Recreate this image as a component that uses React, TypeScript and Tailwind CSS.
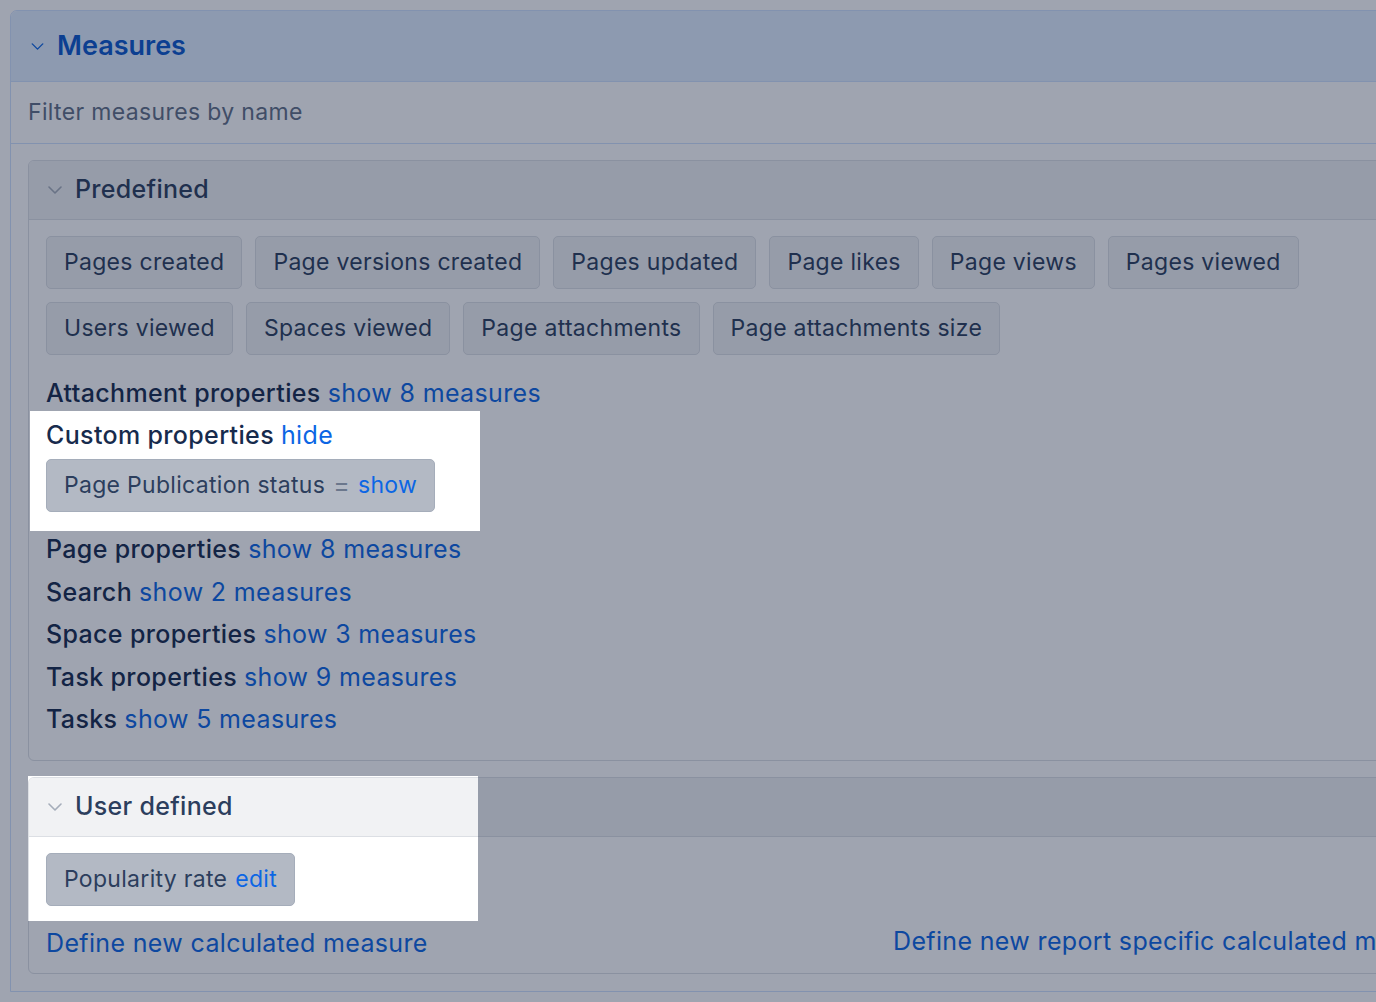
import React from 'react';

const predefinedRow1 = ['Pages created', 'Page versions created', 'Pages updated', 'Page likes', 'Page views', 'Pages viewed'];
const predefinedRow2 = ['Users viewed', 'Spaces viewed', 'Page attachments', 'Page attachments size'];

const groups = [
  { name: 'Page properties', count: 8 },
  { name: 'Search', count: 2 },
  { name: 'Space properties', count: 3 },
  { name: 'Task properties', count: 9 },
  { name: 'Tasks', count: 5 },
];

// spotlight holes in the dimmed blanket
const holes = [
  { x: 30, y: 411, w: 450, h: 120 },
  { x: 28, y: 776, w: 450, h: 145 },
];

function Chevron({ className }: { className?: string }) {
  return (
    <svg viewBox="0 0 14 8" className={className} fill="none" stroke="currentColor" strokeWidth="1.6" strokeLinecap="round" strokeLinejoin="round">
      <path d="M1 1l6 6 6-6" />
    </svg>
  );
}

function Chip({ children, selected }: { children: React.ReactNode; selected?: boolean }) {
  return (
    <div
      className={
        'h-[53px] flex items-center px-[17px] rounded-[5px] border text-[23px] tracking-[0.3px] text-[#2c3e5d] whitespace-nowrap ' +
        (selected ? 'bg-[#b3b9c4] border-[#a5adba]' : 'bg-[#f1f2f4] border-[#dcdfe4]')
      }
    >
      {children}
    </div>
  );
}

function Link({ children }: { children: React.ReactNode }) {
  return <span className="text-[#0c66e4] font-normal cursor-pointer">{children}</span>;
}

function SectionHeader({ title }: { title: string }) {
  return (
    <div className="h-[59px] flex items-center bg-[#f1f2f4] border-b border-[#dcdfe4] rounded-t-[5px]">
      <Chevron className="w-[14px] h-[8px] ml-[19px] mr-[13px] text-[#a5adba]" />
      <span className="text-[25px] tracking-[0.3px] font-medium text-[#2c3e5d]">{title}</span>
    </div>
  );
}

export default function App() {
  const blanket =
    'M0 0H1376V1002H0Z ' + holes.map(h => `M${h.x} ${h.y}h${h.w}v${h.h}h${-h.w}Z`).join(' ');

  return (
    <div className="relative w-[1376px] h-[1002px] overflow-hidden bg-white font-['Inter',sans-serif]">
      <div className="pt-[10px] pl-[10px]">
        <section className="w-[1500px] rounded-t-[7px] border border-[#cfe1fd]">
          {/* Measures header */}
          <div className="h-[71px] flex items-center bg-[#e2efff] border-b border-[#cfe1fd] rounded-t-[6px]">
            <Chevron className="w-[13px] h-[7px] ml-[20px] mr-[13px] text-[#0c66e4]" />
            <span className="text-[27px] font-semibold text-[#0a58cc]">Measures</span>
          </div>

          {/* Filter */}
          <div className="h-[62px] flex items-center pl-[17px] border-b border-[#cfe1fd] text-[23px] tracking-[0.35px] text-[#626f86]">
            Filter measures by name
          </div>

          <div className="pt-[16px] pl-[17px] pb-[17px]">
            {/* Predefined */}
            <div className="rounded-[6px] border border-[#dcdfe4]">
              <SectionHeader title="Predefined" />
              <div className="pt-[16px] pl-[17px] pb-[19px]">
                <div className="flex gap-[13px]">
                  {predefinedRow1.map(c => (
                    <Chip key={c}>{c}</Chip>
                  ))}
                </div>
                <div className="flex gap-[13px] mt-[13px]">
                  {predefinedRow2.map(c => (
                    <Chip key={c}>{c}</Chip>
                  ))}
                </div>

                <div className="mt-[17px] text-[25px] tracking-[0.35px] leading-[42.5px] font-medium text-[#172b4d]">
                  <div>
                    Attachment properties <Link>show 8 measures</Link>
                  </div>
                  <div className="-mt-[1px]">
                    Custom properties <Link>hide</Link>
                  </div>
                  <div className="flex mt-[3px] mb-[16px] leading-normal font-normal">
                    <Chip selected>
                      Page Publication status <span className="text-[#6b778c] text-[25px] mx-[8px]">=</span>
                      <Link>show</Link>
                    </Chip>
                  </div>
                  {groups.map(g => (
                    <div key={g.name}>
                      {g.name} <Link>show {g.count} measures</Link>
                    </div>
                  ))}
                </div>
              </div>
            </div>

            {/* User defined */}
            <div className="mt-[16px] rounded-[6px] border border-[#dcdfe4]">
              <SectionHeader title="User defined" />
              <div className="pt-[16px] pl-[17px] pb-[9px]">
                <div className="flex">
                  <Chip selected>
                    Popularity rate <span className="ml-[8px]"><Link>edit</Link></span>
                  </Chip>
                </div>
                <div className="flex items-start mt-[16px] text-[25px] tracking-[0.35px] leading-[42px]">
                  <div className="w-[847px]">
                    <Link>Define new calculated measure</Link>
                  </div>
                  <div className="-mt-[2px] whitespace-nowrap">
                    <Link>Define new report specific calculated measure</Link>
                  </div>
                </div>
              </div>
            </div>
          </div>
        </section>
      </div>

      {/* dimmed blanket with spotlight holes */}
      <svg className="absolute inset-0 pointer-events-none" width="1376" height="1002" viewBox="0 0 1376 1002">
        <path d={blanket} fillRule="evenodd" fill="rgba(16,28,58,0.4)" />
      </svg>
    </div>
  );
}
